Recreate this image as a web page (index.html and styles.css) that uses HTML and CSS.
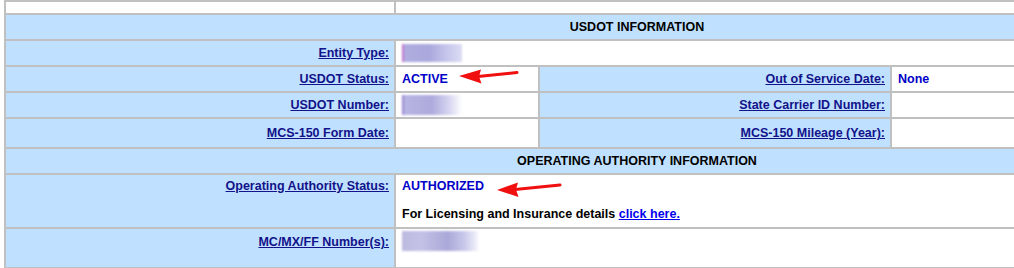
FILE: index.html
```html
<!DOCTYPE html>
<html lang="en">
<head>
<meta charset="utf-8">
<title>USDOT Information</title>
<link rel="stylesheet" href="styles.css">
</head>
<body>
<div class="page">
  <table class="info">
    <colgroup>
      <col class="c1"><col class="c2"><col class="c3"><col class="c4">
    </colgroup>
    <tr class="spacer"><td></td><td colspan="3"></td></tr>
    <tr class="head"><th colspan="4">USDOT INFORMATION</th></tr>
    <tr class="row24">
      <th class="lbl"><a href="#">Entity Type:</a></th>
      <td class="val" colspan="3"><span class="blur blur-entity"></span></td>
    </tr>
    <tr class="row24">
      <th class="lbl"><a href="#">USDOT Status:</a></th>
      <td class="val">ACTIVE</td>
      <th class="lbl"><a href="#">Out of Service Date:</a></th>
      <td class="val">None</td>
    </tr>
    <tr class="row24">
      <th class="lbl"><a href="#">USDOT Number:</a></th>
      <td class="val"><span class="blur blur-number"></span></td>
      <th class="lbl"><a href="#">State Carrier ID Number:</a></th>
      <td class="val"></td>
    </tr>
    <tr class="row28">
      <th class="lbl"><a href="#">MCS-150 Form Date:</a></th>
      <td class="val"></td>
      <th class="lbl"><a href="#">MCS-150 Mileage (Year):</a></th>
      <td class="val"></td>
    </tr>
    <tr class="head"><th colspan="4">OPERATING AUTHORITY INFORMATION</th></tr>
    <tr class="oa">
      <th class="lbl"><a href="#">Operating Authority Status:</a></th>
      <td class="val" colspan="3">AUTHORIZED<br><br><span class="note">For Licensing and Insurance details <a href="#" class="here">click here.</a></span></td>
    </tr>
    <tr class="mc">
      <th class="lbl"><a href="#">MC/MX/FF Number(s):</a></th>
      <td class="val" colspan="3"><span class="blur blur-mc"></span></td>
    </tr>
  </table>

  <svg class="arrows" width="1014" height="268" viewBox="0 0 1014 268" aria-hidden="true">
    <line x1="478" y1="76.5" x2="517" y2="72.5" stroke="#f01010" stroke-width="3" stroke-linecap="round"/>
    <polygon points="459,76 481,69.5 479,76.5 481.5,83.5" fill="#f01010"/>
    <line x1="515" y1="189.5" x2="560" y2="185" stroke="#f01010" stroke-width="3" stroke-linecap="round"/>
    <polygon points="497,190 518,182.5 516,189.5 518.5,197" fill="#f01010"/>
  </svg>
</div>
</body>
</html>
```
FILE: styles.css
```css
html, body {
  margin: 0;
  padding: 0;
  background: #ffffff;
  overflow: hidden;
}

.page {
  position: relative;
  padding-left: 4px;
  width: 1270px;
}

.info {
  border-collapse: separate;
  border-spacing: 2px;
  background: #c0c0c0;
  table-layout: fixed;
  width: 1266px;
  font-family: "Liberation Sans", Arial, sans-serif;
  font-size: 12.5px;
  font-weight: bold;
  line-height: 14px;
}

.info td, .info th {
  box-sizing: border-box;
  padding: 0;
  font-weight: bold;
}

.c1 { width: 388px; }
.c2 { width: 142px; }
.c3 { width: 350px; }
.c4 { width: 376px; }

.spacer td {
  height: 11px;
  background: #ffffff;
}

.head th {
  height: 24px;
  background: #bfe0fe;
  color: #000000;
  text-align: center;
  vertical-align: middle;
}

.lbl {
  background: #bfe0fe;
  text-align: right;
  padding-right: 5px !important;
  vertical-align: middle;
}

.lbl a {
  color: #12128a;
  text-decoration: underline;
}

.val {
  background: #ffffff;
  text-align: left;
  padding-left: 6px !important;
  color: #0000c8;
  vertical-align: middle;
}

.row24 > * { height: 24px; }
.row28 > * { height: 28px; }

.oa > * {
  height: 52px;
  vertical-align: top;
  padding-top: 4px !important;
}

.mc > * {
  height: 38px;
  vertical-align: top;
  padding-top: 6px !important;
}

.note { color: #000000; }

.here {
  color: #0000ee;
  text-decoration: underline;
}

.blur {
  display: inline-block;
  vertical-align: middle;
  filter: blur(1px);
}

.blur-entity {
  width: 60px;
  height: 18px;
  background: linear-gradient(90deg, #b0aee0 0%, #aaa8dc 45%, #c6c6ec 75%, #dcdcf4 100%);
  box-shadow: inset 2px 0 0 #c078d0;
}

.blur-number {
  width: 60px;
  height: 20px;
  background: linear-gradient(90deg, #b8b6e4 0%, #aeaadc 50%, #d8d8f2 80%, #ffffff 100%);
  box-shadow: inset 2px 0 0 #9a8ad0;
}

.blur-mc {
  width: 76px;
  height: 20px;
  margin-top: -4px;
  background: linear-gradient(90deg, #bcbade 0%, #c4c2e6 25%, #aaa8d8 60%, #c8c8ea 82%, #f4f4fc 100%);
}

.arrows {
  position: absolute;
  left: 0;
  top: 0;
  pointer-events: none;
}
```
